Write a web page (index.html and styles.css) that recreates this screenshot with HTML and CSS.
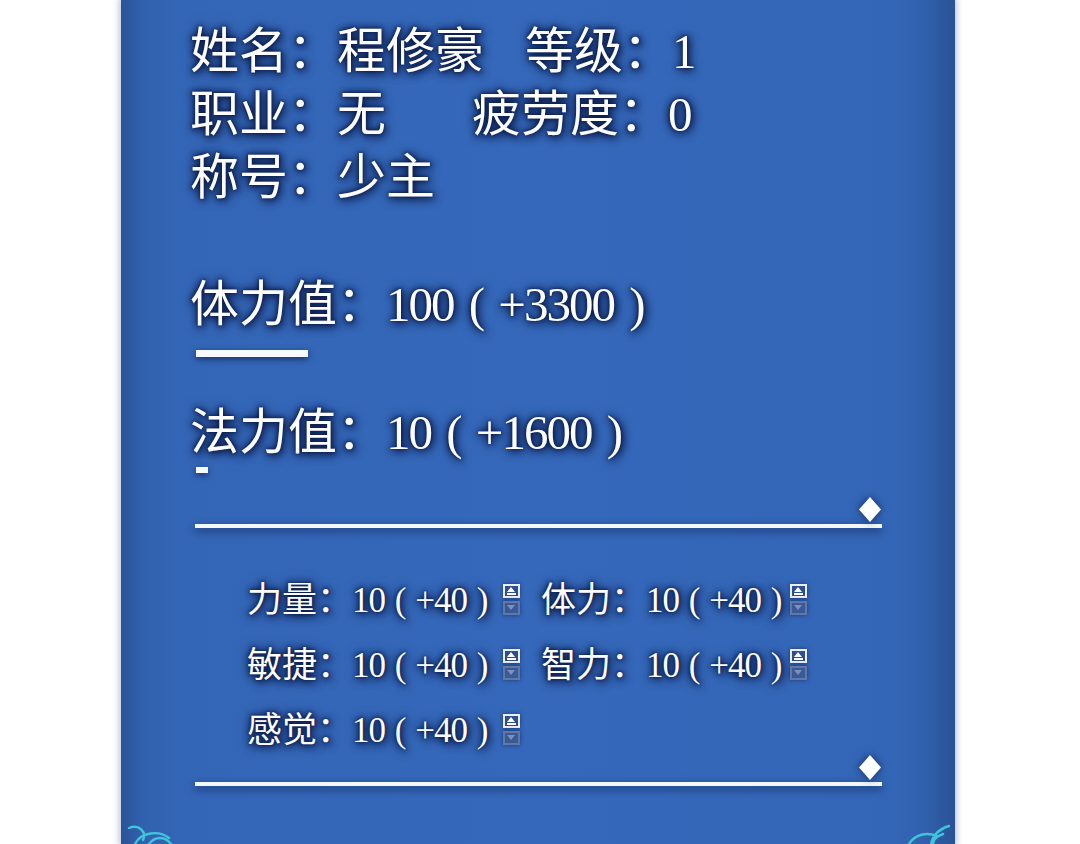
FILE: index.html
```html
<!DOCTYPE html>
<html lang="zh">
<head>
  <meta charset="UTF-8" />
  <meta name="viewport" content="width=device-width, initial-scale=1.0">
  <title>角色属性</title>
  <link rel="stylesheet" href="styles.css">
</head>
<body>

  <div class="panel">
    <div class="info">
      <div class="line"><span>姓名：程修豪</span><span class="gap-lv">等级：<span class="num">1</span></span></div>
      <div class="line"><span>职业：无</span><span class="gap-tired">疲劳度：<span class="num">0</span></span></div>
      <div class="line">称号：少主</div>
    </div>

    <div class="gauge hp">
      <div class="gauge-label">体力值：<span class="num">100 ( +3300 )</span></div>
      <div class="gauge-bar"></div>
    </div>

    <div class="gauge mp">
      <div class="gauge-label">法力值：<span class="num">10 ( +1600 )</span></div>
      <div class="gauge-bar"></div>
    </div>

    <div class="divider first">
      <svg class="diamond" width="22" height="25" viewBox="0 0 22 25"><polygon points="11,0 22,12.5 11,25 0,12.5" fill="#fff"/></svg>
      <div class="rule"></div>
    </div>

    <div class="stats">
      <div class="stat">
        <span class="stat-text">力量：<span class="num">10 ( +40 )</span></span>
        <span class="spin"><i class="up"></i><i class="down"></i></span>
      </div>
      <div class="stat">
        <span class="stat-text">体力：<span class="num">10 ( +40 )</span></span>
        <span class="spin"><i class="up"></i><i class="down"></i></span>
      </div>
      <div class="stat">
        <span class="stat-text">敏捷：<span class="num">10 ( +40 )</span></span>
        <span class="spin"><i class="up"></i><i class="down"></i></span>
      </div>
      <div class="stat">
        <span class="stat-text">智力：<span class="num">10 ( +40 )</span></span>
        <span class="spin"><i class="up"></i><i class="down"></i></span>
      </div>
      <div class="stat">
        <span class="stat-text">感觉：<span class="num">10 ( +40 )</span></span>
        <span class="spin"><i class="up"></i><i class="down"></i></span>
      </div>
    </div>

    <div class="divider">
      <svg class="diamond" width="22" height="25" viewBox="0 0 22 25"><polygon points="11,0 22,12.5 11,25 0,12.5" fill="#fff"/></svg>
      <div class="rule"></div>
    </div>

    <!-- ornamenten onderaan -->
    <svg class="curl left" width="50" height="22" viewBox="0 0 50 22">
      <path d="M4 6 C14 2 22 10 18 18 M10 22 C16 10 34 8 44 16 M24 22 C30 14 40 14 46 22" fill="none" stroke="#3fc4da" stroke-width="2.4" stroke-linecap="round"/>
    </svg>
    <svg class="curl right" width="50" height="22" viewBox="0 0 50 22">
      <path d="M46 4 C38 6 30 12 28 22 M6 22 C12 12 24 10 34 14 M40 12 C34 14 30 18 30 22" fill="none" stroke="#3fc4da" stroke-width="2.4" stroke-linecap="round"/>
    </svg>
  </div>

</body>
</html>
```

FILE: styles.css
```css
html, body {
  margin: 0;
  padding: 0;
  height: 100%;
}
*, *::before, *::after {
  box-sizing: border-box;
}
body {
  background: #fff;
  overflow: hidden;
  font-family: 'Liberation Serif', 'Noto Sans CJK SC', serif;
  color: #fdfdff;
}

.panel {
  position: relative;
  margin-left: 121px;
  width: 834px;
  height: 844px;
  padding: 20px 0 0 69px;
  background: linear-gradient(to right, #2a5399 0, #3161ae 22px, #3466b7 60px, #3568ba 50%, #3466b7 calc(100% - 60px), #3060ac calc(100% - 30px), #2a5296 100%);
  box-shadow: 0 0 6px 2px rgba(60, 90, 150, 0.35);
}

.info,
.gauge-label,
.stat-text {
  text-shadow: 0 0 3px #0a1c48, 0 0 6px rgba(8, 22, 66, 0.95), 0 0 12px rgba(8, 22, 66, 0.7), 2px 3px 8px rgba(5, 15, 50, 0.7);
}

.num {
  letter-spacing: -2px;
  word-spacing: 5px;
}

.info {
  font-size: 49px;
  line-height: 63px;
}
.gap-lv {
  margin-left: 41px;
}
.gap-tired {
  margin-left: 86px;
}

.gauge-label {
  font-size: 49px;
  line-height: 56px;
}
.gauge.hp {
  margin-top: 68px;
}
.gauge.mp {
  margin-top: 48px;
}
.gauge-bar {
  margin-left: 6px;
  background: #f6f9ff;
  box-shadow: 0 2px 6px rgba(8, 25, 70, 0.75);
}
.hp .gauge-bar {
  margin-top: 17px;
  width: 112px;
  height: 7px;
}
.mp .gauge-bar {
  margin-top: 6px;
  width: 12px;
  height: 6px;
}

.divider {
  width: 692px;
  display: flex;
  flex-direction: column;
  align-items: flex-end;
  gap: 2px;
}
.divider.first {
  margin-top: 24px;
}
.diamond {
  margin-right: 1px;
  filter: drop-shadow(0 0 4px rgba(8, 25, 70, 0.8));
}
.rule {
  align-self: stretch;
  margin-left: 5px;
  height: 4px;
  background: #f3f8ff;
  box-shadow: 0 3px 8px rgba(8, 25, 70, 0.75);
}

.stats {
  margin: 49px 0 0 57px;
  display: grid;
  grid-template-columns: 294px auto;
  row-gap: 17px;
  font-size: 35px;
  line-height: 48px;
}
.stats .num {
  letter-spacing: -1px;
  word-spacing: 2px;
}
.stat {
  display: flex;
  align-items: center;
}
.spin {
  display: flex;
  flex-direction: column;
  gap: 3px;
  margin-left: 9px;
  margin-top: -4px;
}
.stat:nth-child(odd) .spin {
  margin-left: 16px;
}
.spin i {
  display: block;
  width: 17px;
  height: 14px;
  position: relative;
  background: #2d4f8e;
  box-shadow: 0 0 4px rgba(8, 25, 70, 0.6);
}
.spin .up {
  border: 2px solid #e9eef8;
}
.spin .up::before {
  content: "";
  position: absolute;
  left: 2px;
  top: 1px;
  border-left: 4.5px solid transparent;
  border-right: 4.5px solid transparent;
  border-bottom: 5px solid #fff;
}
.spin .up::after {
  content: "";
  position: absolute;
  left: 2px;
  right: 2px;
  bottom: 1px;
  height: 2px;
  background: #fff;
}
.spin .down {
  border: 2px solid #6177a4;
  background: #3a5a97;
}
.spin .down::before {
  content: "";
  position: absolute;
  left: 2px;
  top: 2px;
  border-left: 4.5px solid transparent;
  border-right: 4.5px solid transparent;
  border-top: 5px solid #7d90b8;
}

.curl {
  position: absolute;
  bottom: 0;
}
.curl.left {
  left: 4px;
}
.curl.right {
  right: 2px;
}
```
